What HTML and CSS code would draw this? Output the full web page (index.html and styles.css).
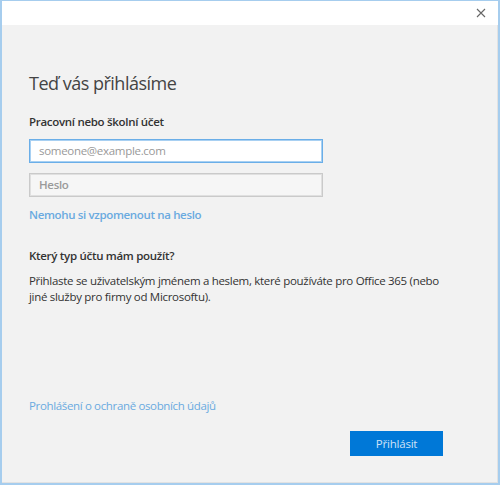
FILE: index.html
```html
<!DOCTYPE html>
<html lang="cs">
<head>
<meta charset="utf-8">
<link rel="stylesheet" href="styles.css">
</head>
<body>
<div class="window">
  <div class="titlebar">
    <span class="close" aria-label="Zavřít">
      <svg width="10" height="10" viewBox="0 0 10 10"><path d="M1 1L9 9M9 1L1 9" stroke="#666" stroke-width="1.1" fill="none"/></svg>
    </span>
  </div>
  <div class="content">
    <h1 class="title">Teď vás přihlásíme</h1>
    <div class="label">Pracovní nebo školní účet</div>
    <div class="field field-active">someone@example.com</div>
    <div class="field field-disabled">Heslo</div>
    <a class="link link-strong">Nemohu si vzpomenout na heslo</a>
    <div class="label label-q">Který typ účtu mám použít?</div>
    <p class="text">Přihlaste se uživatelským jménem a heslem, které používáte pro Office 365 (nebo jiné služby pro firmy od Microsoftu).</p>
    <div class="spacer"></div>
    <a class="link">Prohlášení o ochraně osobních údajů</a>
    <div class="actions">
      <button class="btn">Přihlásit</button>
    </div>
  </div>
</div>
</body>
</html>
```
FILE: styles.css
```css
html, body {
  margin: 0;
  padding: 0;
}
body {
  font-family: "Open Sans", "Noto Sans", sans-serif;
  color: #333;
}
.window {
  width: 500px;
  height: 485px;
  box-sizing: border-box;
  border-style: solid;
  border-color: #a6cdee;
  border-width: 1px 2px 2px 2px;
  display: flex;
  flex-direction: column;
  background: #f2f2f2;
}
.titlebar {
  height: 24px;
  background: #fff;
  display: flex;
  justify-content: flex-end;
  align-items: center;
  padding-right: 12px;
}
.close {
  display: flex;
  width: 10px;
  height: 10px;
}
.content {
  flex: 1;
  display: flex;
  flex-direction: column;
  padding: 0 0 26px 27px;
  border-right: 1px solid #e2e2e2;
  border-bottom: 1px solid #e2e2e2;
}
.title {
  margin: 45px 0 0 0;
  font-size: 18px;
  font-weight: 400;
  line-height: 26px;
  letter-spacing: -0.5px;
  color: #444;
}
.label {
  margin-top: 18px;
  font-size: 11.5px;
  font-weight: 600;
  line-height: 16px;
  letter-spacing: -0.3px;
  color: #333;
}
.field {
  box-sizing: border-box;
  width: 294px;
  height: 24px;
  margin-top: 9px;
  padding: 0 9px;
  font-size: 11.5px;
  line-height: 21px;
  letter-spacing: -0.3px;
  color: #999;
}
.field-disabled {
  margin-top: 10px;
}
.field-active {
  background: #fff;
  border: 1px solid #6aaee8;
  box-shadow: inset 0 0 0 1px #a8d0f2;
}
.field-disabled {
  background: #f6f6f6;
  border: 1px solid #cacaca;
  box-shadow: inset 0 0 0 1px #e0e0e0;
  font-weight: 600;
  color: #9a9a9a;
}
.link {
  font-size: 11.5px;
  line-height: 16px;
  letter-spacing: -0.35px;
  color: #6aaae0;
}
.link-strong {
  margin-top: 10px;
  font-weight: 600;
}
.label-q {
  margin-top: 25px;
}
.text {
  margin: 9px 0 0 0;
  width: 420px;
  font-size: 11.5px;
  line-height: 16px;
  letter-spacing: -0.3px;
  color: #333;
}
.spacer {
  flex: 1;
}
.actions {
  display: flex;
  justify-content: flex-end;
  padding-right: 54px;
  margin-top: 17px;
}
.btn {
  width: 93px;
  height: 25px;
  border: none;
  background: #0078d7;
  color: #cfe2f6;
  font-family: "Open Sans", "Noto Sans", sans-serif;
  font-size: 11.5px;
  letter-spacing: -0.2px;
  padding: 0;
}
```
